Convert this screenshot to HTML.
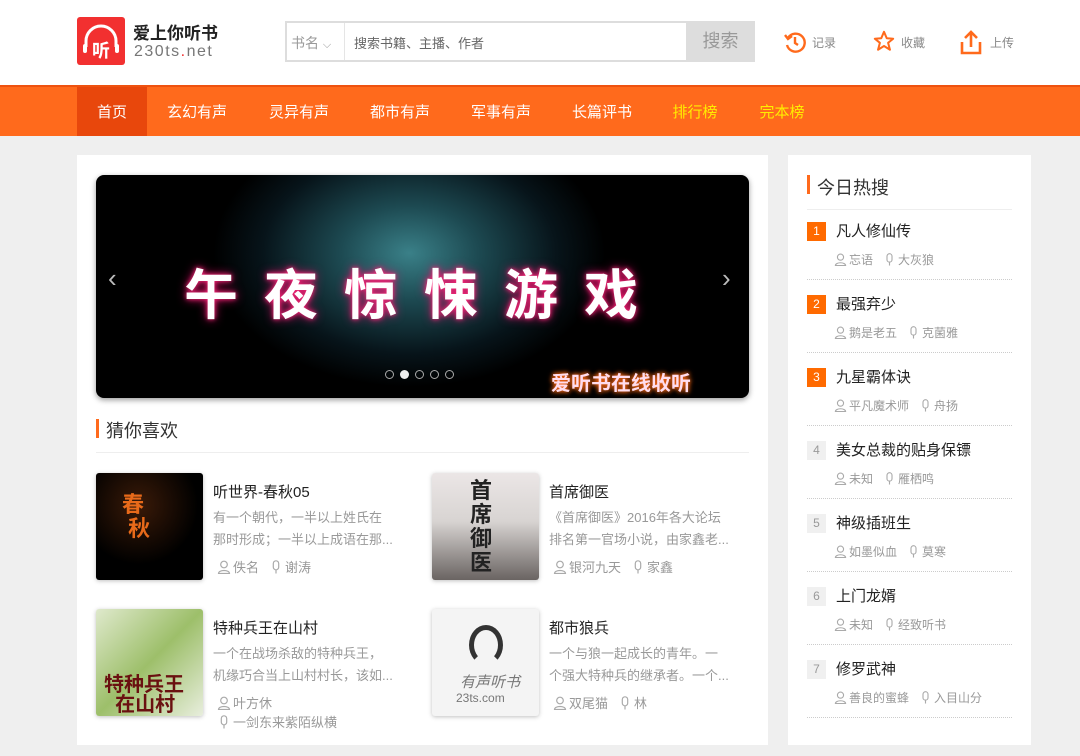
<!DOCTYPE html>
<html><head><meta charset="utf-8">
<style>
*{margin:0;padding:0;box-sizing:border-box}
body{width:1080px;height:756px;background:#efefef;font-family:"Liberation Sans","Noto Sans CJK SC",sans-serif;position:relative;overflow:hidden;color:#333}
.a{position:absolute}
.hdr{left:0;top:0;width:1080px;height:85px;background:#fff}
.nav{left:0;top:85px;width:1080px;height:51px;background:#ff6a1c;border-top:2px solid #ee5210}
.nav span{position:absolute;top:0;height:49px;line-height:51px;color:#fff;font-size:15px;text-align:center;width:70px}
.main{left:77px;top:155px;width:691px;height:590px;background:#fff}
.side{left:788px;top:155px;width:243px;height:590px;background:#fff}
.t{font-size:15px;color:#222;white-space:nowrap}
.d{font-size:13px;color:#999;line-height:22px;white-space:nowrap}
.m{font-size:13px;color:#999;white-space:nowrap;display:flex;align-items:center}
.m svg{margin-right:2px}
.m b{font-weight:normal;margin-right:10px}
.cov{width:107px;height:107px;border-radius:3px;box-shadow:0 1px 4px rgba(0,0,0,.25);overflow:hidden}
.num{width:19px;height:19px;font-size:12px;line-height:19px;text-align:center}
.hot{background:#ff6a00;color:#fff}
.cold{background:#f0f0f0;color:#999}
.dot{border-top:1px dotted #ccc;width:205px;left:807px;height:0}
</style></head><body>
<svg width="0" height="0" style="position:absolute"><defs>
<symbol id="u" viewBox="0 0 14 14"><circle cx="7" cy="4.5" r="3.3" fill="none" stroke="#aaa" stroke-width="1.2"/><path d="M1.5 13.5 C1.5 9.5 12.5 9.5 12.5 13.5 Z" fill="none" stroke="#aaa" stroke-width="1.2"/></symbol>
<symbol id="k" viewBox="0 0 14 14"><rect x="4.3" y="0.8" width="5.4" height="9" rx="2.7" fill="none" stroke="#aaa" stroke-width="1.2"/><path d="M7 10 V13.5" stroke="#aaa" stroke-width="1.2"/></symbol>
</defs></svg>
<div class="a hdr"></div>
<div class="a" style="left:77px;top:17px;width:48px;height:48px;background:#f23030;border-radius:3px"></div>
<svg class="a" style="left:77px;top:17px" width="48" height="48" viewBox="0 0 48 48"><path d="M9 30 V24 A15 15 0 0 1 39 24 V30" stroke="#fff" stroke-width="3" fill="none"/><rect x="6" y="27" width="4" height="9" rx="2" fill="#fff"/><rect x="38" y="27" width="4" height="9" rx="2" fill="#fff"/><text x="24" y="40" font-size="18" fill="#fff" text-anchor="middle" font-family="Noto Sans CJK SC" font-weight="bold">听</text></svg>
<div class="a" style="left:133px;top:19px;font-size:17px;font-weight:bold;color:#222">爱上你听书</div>
<div class="a" style="left:134px;top:43px;font-size:16px;color:#777;letter-spacing:1.5px">230ts<span style="color:#f23030">.</span>net</div>
<div class="a" style="left:285px;top:21px;width:470px;height:41px;border:2px solid #ddd;background:#fff"></div>
<div class="a" style="left:291px;top:33px;font-size:14px;color:#999">书名 <span style="font-size:11px">⌵</span></div>
<div class="a" style="left:344px;top:23px;width:1px;height:37px;background:#e5e5e5"></div>
<div class="a" style="left:354px;top:33px;font-size:13px;color:#666">搜索书籍、主播、作者</div>
<div class="a" style="left:686px;top:21px;width:69px;height:41px;background:#ddd;color:#999;font-size:18px;line-height:41px;text-align:center">搜索</div>
<svg class="a" style="left:783px;top:30px" width="24" height="24" viewBox="0 0 24 24" fill="none" stroke="#ff6a1c" stroke-width="2.4"><path d="M5 8 A9 9 0 1 1 4 15"/><path d="M2 5 L5 9 L9 6"/><path d="M12 7 V13 L15 15"/></svg>
<div class="a" style="left:812px;top:34px;font-size:12px;color:#888">记录</div>
<svg class="a" style="left:873px;top:30px" width="22" height="22" viewBox="0 0 24 24" fill="none" stroke="#ff6a1c" stroke-width="2.2" stroke-linejoin="round"><path d="M12 2 L15 9 L22 9.5 L16.5 14 L18.5 21.5 L12 17.5 L5.5 21.5 L7.5 14 L2 9.5 L9 9 Z"/></svg>
<div class="a" style="left:901px;top:34px;font-size:12px;color:#888">收藏</div>
<svg class="a" style="left:960px;top:29px" width="22" height="26" viewBox="0 0 22 26" fill="none" stroke="#ff6a1c" stroke-width="2.6"><path d="M11 18 V3 M5 9 L11 3 L17 9"/><path d="M2 13 V24 H20 V13"/></svg>
<div class="a" style="left:990px;top:34px;font-size:12px;color:#888">上传</div>

<div class="a nav">
<span style="left:77px;background:#e8470c">首页</span>
<span style="left:162px">玄幻有声</span>
<span style="left:264px">灵异有声</span>
<span style="left:365px">都市有声</span>
<span style="left:466px">军事有声</span>
<span style="left:567px">长篇评书</span>
<span style="left:660px;color:#ffee00">排行榜</span>
<span style="left:747px;color:#ffee00">完本榜</span>
</div>

<div class="a main"></div>
<div class="a" style="left:96px;top:175px;width:653px;height:223px;border-radius:8px;overflow:hidden;background:radial-gradient(ellipse 30% 60% at 48% 35%,#3a8088 0%,#1d4a52 35%,#07141a 75%,#000 100%),#000;box-shadow:0 2px 6px rgba(0,0,0,.4)">
<div class="a" style="left:88px;top:76px;font-size:54px;color:#fff;letter-spacing:26px;text-shadow:0 0 5px #ff2a7a,0 0 10px #e0106a;font-family:'Noto Sans CJK SC',sans-serif;font-weight:bold">午夜惊悚游戏</div>
<div class="a" style="left:455px;top:192px;font-size:20px;color:#fde;text-shadow:0 0 4px #ff6a1c,0 0 6px #f60;font-weight:bold">爱听书在线收听</div>
<div class="a" style="left:12px;top:88px;font-size:26px;color:#bbb">‹</div>
<div class="a" style="left:626px;top:88px;font-size:26px;color:#bbb">›</div>
<div class="a" style="left:289px;top:195px;display:flex;gap:6px">
<i style="width:9px;height:9px;border:1.5px solid #aaa;border-radius:50%"></i><i style="width:9px;height:9px;background:#eee;border-radius:50%"></i><i style="width:9px;height:9px;border:1.5px solid #aaa;border-radius:50%"></i><i style="width:9px;height:9px;border:1.5px solid #aaa;border-radius:50%"></i><i style="width:9px;height:9px;border:1.5px solid #aaa;border-radius:50%"></i></div>
</div>
<div class="a" style="left:96px;top:419px;width:3px;height:19px;background:#ff6a1c"></div>
<div class="a" style="left:106px;top:417px;font-size:18px;color:#333">猜你喜欢</div>
<div class="a" style="left:96px;top:452px;width:653px;height:1px;background:#eee"></div>

<div class="a cov" style="left:96px;top:473px;background:radial-gradient(circle at 40% 30%,#3a1a08,#000 60%)"><div class="a" style="left:26px;top:20px;font-size:22px;color:#e86a1a;font-weight:bold;line-height:24px">春<br>&nbsp;秋</div></div>
<div class="a t" style="left:213px;top:481px">听世界-春秋05</div>
<div class="a d" style="left:213px;top:507px">有一个朝代，一半以上姓氏在<br>那时形成；一半以上成语在那...</div>
<div class="a m" style="left:217px;top:557px"><svg width="14" height="14"><use href="#u"/></svg><b>佚名</b><svg width="14" height="14"><use href="#k"/></svg><b>谢涛</b></div>

<div class="a cov" style="left:432px;top:473px;background:linear-gradient(#ebe6e6 0%,#d8d4d2 45%,#6a6462 100%)"><div class="a" style="left:38px;top:6px;font-size:22px;color:#222;line-height:24px;font-weight:bold">首<br>席<br>御<br>医</div></div>
<div class="a t" style="left:549px;top:481px">首席御医</div>
<div class="a d" style="left:549px;top:507px">《首席御医》2016年各大论坛<br>排名第一官场小说，由家鑫老...</div>
<div class="a m" style="left:553px;top:557px"><svg width="14" height="14"><use href="#u"/></svg><b>银河九天</b><svg width="14" height="14"><use href="#k"/></svg><b>家鑫</b></div>

<div class="a cov" style="left:96px;top:609px;background:linear-gradient(135deg,#dfe9cc,#9dbf6a 50%,#e8eedd)"><div class="a" style="left:8px;top:66px;font-size:20px;color:#6a1010;font-weight:bold;line-height:20px">特种兵王<br>&nbsp;&nbsp;在山村</div></div>
<div class="a t" style="left:213px;top:617px">特种兵王在山村</div>
<div class="a d" style="left:213px;top:643px">一个在战场杀敌的特种兵王，<br>机缘巧合当上山村村长，该如...</div>
<div class="a m" style="left:217px;top:693px"><svg width="14" height="14"><use href="#u"/></svg><b>叶方休</b></div>
<div class="a m" style="left:217px;top:712px"><svg width="14" height="14"><use href="#k"/></svg><b>一剑东来紫陌纵横</b></div>

<div class="a cov" style="left:432px;top:609px;background:#f4f4f4"><div class="a" style="left:37px;top:16px;width:34px;height:40px;border-radius:50%;border:5px solid #333;border-bottom-color:transparent"></div><div class="a" style="left:28px;top:62px;font-size:15px;color:#777;font-style:italic">有声听书</div><div class="a" style="left:24px;top:82px;font-size:12px;color:#777">23ts.com</div></div>
<div class="a t" style="left:549px;top:617px">都市狼兵</div>
<div class="a d" style="left:549px;top:643px">一个与狼一起成长的青年。一<br>个强大特种兵的继承者。一个...</div>
<div class="a m" style="left:553px;top:693px"><svg width="14" height="14"><use href="#u"/></svg><b>双尾猫</b><svg width="14" height="14"><use href="#k"/></svg><b>林</b></div>

<div class="a side"></div>
<div class="a" style="left:807px;top:175px;width:3px;height:19px;background:#ff6a1c"></div>
<div class="a" style="left:817px;top:174px;font-size:18px;color:#333">今日热搜</div>
<div class="a" style="left:807px;top:209px;width:205px;height:1px;background:#eee"></div>

<div class="a num hot" style="left:807px;top:222px">1</div><div class="a t" style="left:836px;top:220px">凡人修仙传</div><div class="a m" style="left:834px;top:251px;font-size:12px"><svg width="13" height="13"><use href="#u"/></svg><b>忘语</b><svg width="13" height="13"><use href="#k"/></svg><b>大灰狼</b></div><div class="a dot" style="top:279px"></div>
<div class="a num hot" style="left:807px;top:295px">2</div><div class="a t" style="left:836px;top:293px">最强弃少</div><div class="a m" style="left:834px;top:324px;font-size:12px"><svg width="13" height="13"><use href="#u"/></svg><b>鹅是老五</b><svg width="13" height="13"><use href="#k"/></svg><b>克菌雅</b></div><div class="a dot" style="top:352px"></div>
<div class="a num hot" style="left:807px;top:368px">3</div><div class="a t" style="left:836px;top:366px">九星霸体诀</div><div class="a m" style="left:834px;top:397px;font-size:12px"><svg width="13" height="13"><use href="#u"/></svg><b>平凡魔术师</b><svg width="13" height="13"><use href="#k"/></svg><b>舟扬</b></div><div class="a dot" style="top:425px"></div>
<div class="a num cold" style="left:807px;top:441px">4</div><div class="a t" style="left:836px;top:439px">美女总裁的贴身保镖</div><div class="a m" style="left:834px;top:470px;font-size:12px"><svg width="13" height="13"><use href="#u"/></svg><b>未知</b><svg width="13" height="13"><use href="#k"/></svg><b>雁栖鸣</b></div><div class="a dot" style="top:498px"></div>
<div class="a num cold" style="left:807px;top:514px">5</div><div class="a t" style="left:836px;top:512px">神级插班生</div><div class="a m" style="left:834px;top:543px;font-size:12px"><svg width="13" height="13"><use href="#u"/></svg><b>如墨似血</b><svg width="13" height="13"><use href="#k"/></svg><b>莫寒</b></div><div class="a dot" style="top:571px"></div>
<div class="a num cold" style="left:807px;top:587px">6</div><div class="a t" style="left:836px;top:585px">上门龙婿</div><div class="a m" style="left:834px;top:616px;font-size:12px"><svg width="13" height="13"><use href="#u"/></svg><b>未知</b><svg width="13" height="13"><use href="#k"/></svg><b>经致听书</b></div><div class="a dot" style="top:644px"></div>
<div class="a num cold" style="left:807px;top:660px">7</div><div class="a t" style="left:836px;top:658px">修罗武神</div><div class="a m" style="left:834px;top:689px;font-size:12px"><svg width="13" height="13"><use href="#u"/></svg><b>善良的蜜蜂</b><svg width="13" height="13"><use href="#k"/></svg><b>入目山分</b></div><div class="a dot" style="top:717px"></div>
</body></html>
